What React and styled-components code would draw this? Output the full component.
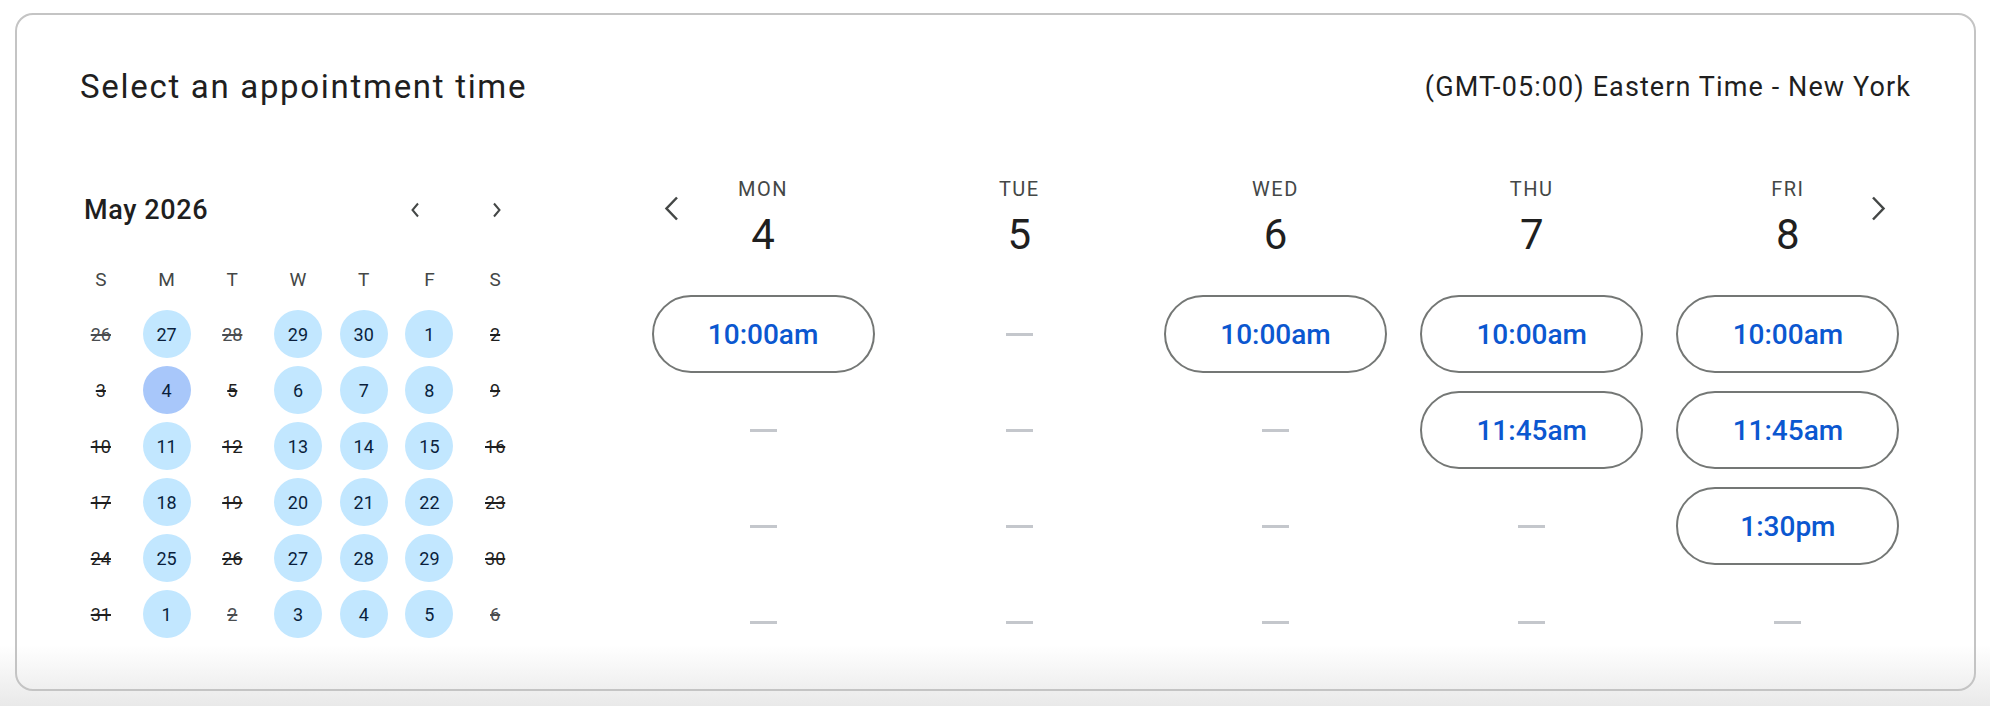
import styled, { createGlobalStyle } from 'styled-components';

const GlobalStyle = createGlobalStyle`
    html, body {
        margin: 0;
        padding: 0;
    }
    body {
        min-height: 706px;
        background: linear-gradient(to bottom, #ffffff 0, #ffffff 645px, #e9e9e9 706px);
        font-family: Roboto, "Liberation Sans", sans-serif;
        color: #1f1f1f;
    }
`;

const Card = styled.section`
    box-sizing: border-box;
    height: 678px;
    margin: 13px 14px 0 15px;
    padding: 52px 63px 0;
    border: 2px solid #c4c4c4;
    border-radius: 18px;
`;

const Header = styled.header`
    display: flex;
    align-items: center;
    justify-content: space-between;
    height: 40px;
`;

const Title = styled.h1`
    margin: 0;
    font-size: 33px;
    line-height: 40px;
    font-weight: 400;
    letter-spacing: 1.7px;
    color: #1f1f1f;
`;

const Timezone = styled.div`
    font-size: 27px;
    line-height: 40px;
    letter-spacing: 1.1px;
    color: #1f1f1f;
`;

const Body = styled.div`
    display: grid;
    grid-template-columns: 460px 1fr;
    column-gap: 107px;
    margin: 70px -5px 0 -12px;
`;

// Month calendar
const Calendar = styled.div`
    margin-top: 9px;
`;

const MonthHeader = styled.div`
    display: flex;
    align-items: center;
    height: 48px;
    padding-left: 16px;
`;

const MonthLabel = styled.div`
    flex: 1;
    font-size: 27px;
    font-weight: 500;
    letter-spacing: 0.6px;
    color: #1f1f1f;
`;

const MonthNav = styled.div`
    display: flex;
    gap: 34px;
    margin-right: 7px;
`;

const IconButton = styled.button`
    display: flex;
    align-items: center;
    justify-content: center;
    width: ${p => p.$size}px;
    height: ${p => p.$size}px;
    padding: 0;
    border: none;
    border-radius: 50%;
    background: transparent;
    color: #444746;
    cursor: pointer;
`;

const Weekdays = styled.div`
    display: grid;
    grid-template-columns: repeat(7, 1fr);
    height: 44px;
    margin-top: 23px;
    align-items: center;
    justify-items: center;
    font-size: 19px;
    color: #444746;
`;

const Days = styled.div`
    display: grid;
    grid-template-columns: repeat(7, 1fr);
    grid-auto-rows: 56px;
    margin-top: 5px;
    align-items: center;
    justify-items: center;
`;

const Day = styled.div`
    display: flex;
    align-items: center;
    justify-content: center;
    width: 48px;
    height: 48px;
    border-radius: 50%;
    font-size: 18px;
    font-weight: 400;
    background: ${p => (p.$selected ? '#a8c7fa' : p.$available ? '#c2e7ff' : 'transparent')};
    color: ${p => (p.$available ? '#0a1f3d' : p.$outside ? '#4a4d50' : '#1f1f1f')};
    text-decoration: ${p => (p.$available ? 'none' : 'line-through')};
    text-decoration-thickness: 2px;
`;

// Week of slots
const WeekPanel = styled.div`
    position: relative;
`;

const WeekGrid = styled.div`
    display: grid;
    grid-template-columns: repeat(5, 1fr);
`;

const DayColumn = styled.div`
    display: flex;
    flex-direction: column;
    align-items: center;
`;

const DayName = styled.div`
    font-size: 20px;
    line-height: 24px;
    letter-spacing: 1.5px;
    color: #444746;
`;

const DayNumber = styled.div`
    margin-top: 10px;
    font-size: 42px;
    line-height: 48px;
    color: #1f1f1f;
`;

const Slots = styled.div`
    display: flex;
    flex-direction: column;
    gap: 18px;
    margin-top: 36px;
`;

const SlotButton = styled.button`
    box-sizing: border-box;
    width: 223px;
    height: 78px;
    border: 2px solid #747775;
    border-radius: 39px;
    background: transparent;
    font-family: inherit;
    font-size: 28px;
    font-weight: 500;
    color: #0b57d0;
    cursor: pointer;
`;

const EmptySlot = styled.div`
    display: flex;
    align-items: center;
    justify-content: center;
    width: 223px;
    height: 78px;

    &::before {
        content: '';
        width: 27px;
        height: 3px;
        background: #c4c7cc;
    }
`;

const WeekArrow = styled(IconButton)`
    position: absolute;
    top: 11px;
    ${p => (p.$side === 'left' ? 'left: 16px;' : 'right: 18px;')}
`;

const Chevron = ({ dir, w, h, stroke = 2 }) => (
    <svg width={w} height={h} viewBox={`0 0 ${w} ${h}`} fill="none">
        <path
            d={dir === 'left'
                ? `M${w - 2} 1.5 L2.5 ${h / 2} L${w - 2} ${h - 1.5}`
                : `M2 1.5 L${w - 2.5} ${h / 2} L2 ${h - 1.5}`}
            stroke="currentColor"
            strokeWidth={stroke}
            strokeLinejoin="miter"
        />
    </svg>
);

const WEEKDAY_LETTERS = ['S', 'M', 'T', 'W', 'T', 'F', 'S'];

const buildDays = () => {
    const days = [];
    const start = new Date(2026, 3, 26);
    for (let i = 0; i < 42; i++) {
        const d = new Date(start);
        d.setDate(start.getDate() + i);
        const wd = d.getDay();
        days.push({
            key: i,
            date: d.getDate(),
            outside: d.getMonth() !== 4,
            available: wd === 1 || wd === 3 || wd === 4 || wd === 5,
            selected: d.getMonth() === 4 && d.getDate() === 4,
        });
    }
    return days;
};

const WEEK = [
    { name: 'MON', date: 4, slots: ['10:00am', null, null, null] },
    { name: 'TUE', date: 5, slots: [null, null, null, null] },
    { name: 'WED', date: 6, slots: ['10:00am', null, null, null] },
    { name: 'THU', date: 7, slots: ['10:00am', '11:45am', null, null] },
    { name: 'FRI', date: 8, slots: ['10:00am', '11:45am', '1:30pm', null] },
];

export default function App() {
    const days = buildDays();

    return (
        <>
            <GlobalStyle />
            <Card>
                <Header>
                    <Title>Select an appointment time</Title>
                    <Timezone>(GMT-05:00) Eastern Time - New York</Timezone>
                </Header>
                <Body>
                    <Calendar>
                        <MonthHeader>
                            <MonthLabel>May 2026</MonthLabel>
                            <MonthNav>
                                <IconButton $size={48} aria-label="Previous month">
                                    <Chevron dir="left" w={10} h={16} />
                                </IconButton>
                                <IconButton $size={48} aria-label="Next month">
                                    <Chevron dir="right" w={10} h={16} />
                                </IconButton>
                            </MonthNav>
                        </MonthHeader>
                        <Weekdays>
                            {WEEKDAY_LETTERS.map((l, i) => <div key={i}>{l}</div>)}
                        </Weekdays>
                        <Days>
                            {days.map(d => (
                                <Day
                                    key={d.key}
                                    $available={d.available}
                                    $selected={d.selected}
                                    $outside={d.outside}
                                >
                                    {d.date}
                                </Day>
                            ))}
                        </Days>
                    </Calendar>

                    <WeekPanel>
                        <WeekArrow $size={40} $side="left" aria-label="Previous week">
                            <Chevron dir="left" w={15} h={25} stroke={2.5} />
                        </WeekArrow>
                        <WeekArrow $size={40} $side="right" aria-label="Next week">
                            <Chevron dir="right" w={15} h={25} stroke={2.5} />
                        </WeekArrow>
                        <WeekGrid>
                            {WEEK.map(day => (
                                <DayColumn key={day.name}>
                                    <DayName>{day.name}</DayName>
                                    <DayNumber>{day.date}</DayNumber>
                                    <Slots>
                                        {day.slots.map((s, i) =>
                                            s ? <SlotButton key={i}>{s}</SlotButton> : <EmptySlot key={i} />
                                        )}
                                    </Slots>
                                </DayColumn>
                            ))}
                        </WeekGrid>
                    </WeekPanel>
                </Body>
            </Card>
        </>
    );
}
